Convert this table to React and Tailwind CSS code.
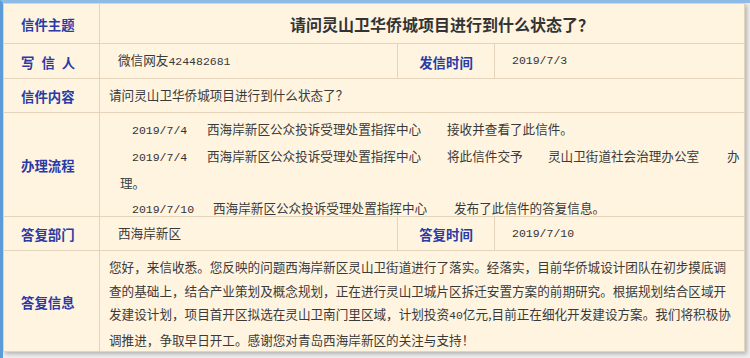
import React from 'react'

const cjk = { fontFamily: '"Noto Sans CJK SC", "Noto Sans", sans-serif' }
const mono = { fontFamily: '"Liberation Mono", "DejaVu Sans Mono", monospace' }

// one cell of the letter table
function Cell({ children, className = '' }) {
  return <div className={`bg-[#fff4e0] ${className}`}>{children}</div>
}

function Label({ children }) {
  return (
    <Cell className="flex items-center pl-[17px] pt-[2px] text-[13.4px] font-bold text-[#2a3ba6]">
      {children}
    </Cell>
  )
}

function Date({ children, className = '' }) {
  return (
    <span className={`inline-block text-[11.5px] text-[#333] ${className}`} style={mono}>
      {children}
    </span>
  )
}

export default function App() {
  // handling steps (办理流程)
  const steps = [
    { date: '2019/7/4', dateW: 'w-[75px]', org: '西海岸新区公众投诉受理处置指挥中心', orgW: 'w-[240px]', act: '接收并查看了此信件。' },
  ]

  const reply = [
    '您好，来信收悉。您反映的问题西海岸新区灵山卫街道进行了落实。经落实，目前华侨城设计团队在初步摸底调',
    '查的基础上，结合产业策划及概念规划，正在进行灵山卫城片区拆迁安置方案的前期研究。根据规划结合区域开',
  ]

  return (
    <div
      className="w-[750px] h-[358px] overflow-hidden bg-[#efefef] border-l-[3px] border-l-[#5b9bd8] border-t-[3px] border-t-[#8dbbe6]"
      style={cjk}
    >
      <div className="w-[742px] grid grid-cols-[95px_297px_96px_249px] grid-rows-[39px_34px_33px_103px_33px_100px] gap-px p-px bg-[#e3d4bb] shadow-[2px_2px_4px_rgba(0,0,0,0.25)]">
        {/* 信件主题 */}
        <Label>信件主题</Label>
        <Cell className="col-span-3 flex items-center justify-center pl-[40px] text-[16px] font-bold text-[#333]">
          请问灵山卫华侨城项目进行到什么状态了？
        </Cell>

        {/* 写信人 / 发信时间 */}
        <Label>
          <span>写</span>
          <span className="ml-[7px]">信</span>
          <span className="ml-[7px]">人</span>
        </Label>
        <Cell className="flex items-center pl-[18px] text-[12.6px] text-[#3a3a3a]">
          <span>
            微信网友<span className="text-[11.5px]" style={mono}>424482681</span>
          </span>
        </Cell>
        <Cell className="flex items-center justify-center pt-[2px] text-[13.4px] font-bold text-[#2a3ba6]">发信时间</Cell>
        <Cell className="flex items-center pl-[17px] text-[12.6px]">
          <Date>2019/7/3</Date>
        </Cell>

        {/* 信件内容 */}
        <Label>信件内容</Label>
        <Cell className="col-span-3 flex items-center pl-[9px] text-[12.6px] text-[#3a3a3a]">
          请问灵山卫华侨城项目进行到什么状态了？
        </Cell>

        {/* 办理流程 */}
        <Label>办理流程</Label>
        <Cell className="col-span-3 pt-[3px] text-[12.6px] leading-[25px] text-[#3a3a3a] whitespace-nowrap">
          {steps.map((s, i) => (
            <div key={i} className="flex items-baseline pl-[32px]">
              <Date className={s.dateW}>{s.date}</Date>
              <span className={s.orgW}>{s.org}</span>
              <span>{s.act}</span>
            </div>
          ))}
          <div className="flex items-baseline pl-[32px]">
            <Date className="w-[75px]">2019/7/4</Date>
            <span className="w-[240px]">西海岸新区公众投诉受理处置指挥中心</span>
            <span className="w-[101px]">将此信件交予</span>
            <span className="w-[179px]">灵山卫街道社会治理办公室</span>
            <span>办</span>
          </div>
          <div className="pl-[20px]">理。</div>
          <div className="flex items-baseline pl-[32px]">
            <Date className="w-[81px]">2019/7/10</Date>
            <span className="w-[241px]">西海岸新区公众投诉受理处置指挥中心</span>
            <span>发布了此信件的答复信息。</span>
          </div>
        </Cell>

        {/* 答复部门 / 答复时间 */}
        <Label>答复部门</Label>
        <Cell className="flex items-center pl-[18px] text-[12.6px] text-[#3a3a3a]">西海岸新区</Cell>
        <Cell className="flex items-center justify-center pt-[2px] text-[13.4px] font-bold text-[#2a3ba6]">答复时间</Cell>
        <Cell className="flex items-center pl-[17px] text-[12.6px]">
          <Date>2019/7/10</Date>
        </Cell>

        {/* 答复信息 */}
        <Label>答复信息</Label>
        <Cell className="col-span-3 pt-[4px] pl-[9px] text-[12.6px] leading-[23.5px] text-[#3a3a3a] whitespace-nowrap">
          {reply.map((line, i) => (
            <div key={i}>{line}</div>
          ))}
          <div>
            发建设计划，项目首开区拟选在灵山卫南门里区域，计划投资<span className="text-[11.5px]" style={mono}>40</span>亿元,目前正在细化开发建设方案。我们将积极协
          </div>
          <div>调推进，争取早日开工。感谢您对青岛西海岸新区的关注与支持！</div>
        </Cell>
      </div>
    </div>
  )
}
